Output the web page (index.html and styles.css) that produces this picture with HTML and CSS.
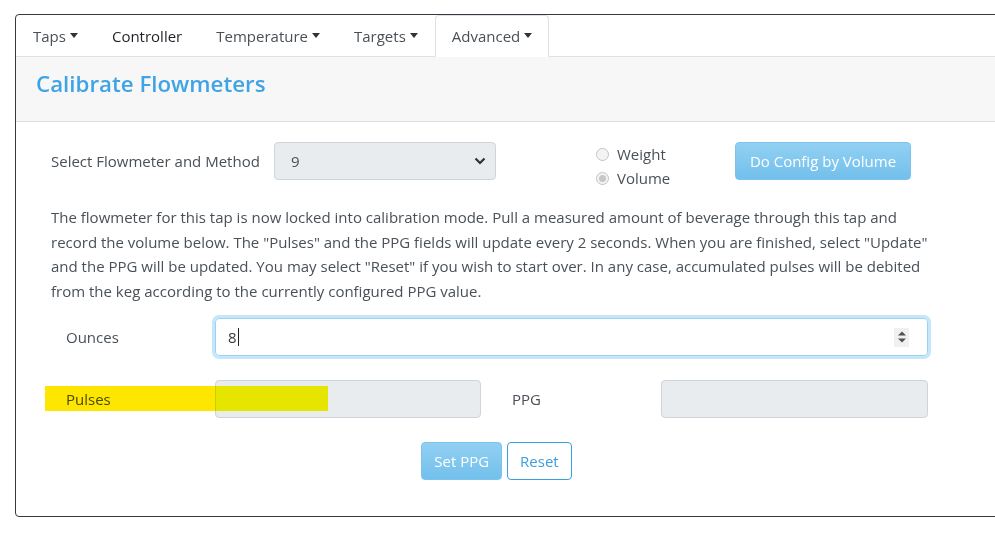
FILE: index.html
```html
<!DOCTYPE html>
<html lang="en">
<head>
    <meta charset="UTF-8">
    <title>Calibrate Flowmeters</title>
    <link rel="stylesheet" href="styles.css">
</head>
<body>
    <div class="card">
        <ul class="nav">
            <li class="nav-link toggle">Taps</li>
            <li class="nav-link dark">Controller</li>
            <li class="nav-link toggle">Temperature</li>
            <li class="nav-link toggle">Targets</li>
            <li class="nav-link toggle active">Advanced</li>
        </ul>

        <div class="card-header">
            <h4>Calibrate Flowmeters</h4>
        </div>

        <div class="card-body">
            <div class="method-row">
                <label class="method-label">Select Flowmeter and Method</label>
                <div class="fake-select">
                    <span>9</span>
                    <svg width="12" height="8" viewBox="0 0 12 8"><path d="M1.5 1.5 L6 6 L10.5 1.5" fill="none" stroke="#333" stroke-width="2.2"/></svg>
                </div>
                <div class="radios">
                    <div class="radio"><span class="dot"></span>Weight</div>
                    <div class="radio"><span class="dot checked"></span>Volume</div>
                </div>
                <button class="btn btn-primary btn-config" disabled>Do Config by Volume</button>
            </div>

            <p class="info">
                The flowmeter for this tap is now locked into calibration mode. Pull a measured amount of beverage through this tap and
                record the volume below. The "Pulses" and the PPG fields will update every 2 seconds. When you are finished, select "Update"
                and the PPG will be updated. You may select "Reset" if you wish to start over. In any case, accumulated pulses will be debited
                from the keg according to the currently configured PPG value.
            </p>

            <div class="form-row">
                <label class="field-label">Ounces</label>
                <div class="input focused">
                    <span class="value">8</span><span class="cursor"></span>
                    <span class="spinner">
                        <svg width="10" height="14" viewBox="0 0 10 14"><path d="M1 5.5 L5 1.5 L9 5.5Z M1 8.5 L5 12.5 L9 8.5Z" fill="#505050"/></svg>
                    </span>
                </div>
            </div>

            <div class="form-row">
                <label class="field-label">Pulses</label>
                <div class="input readonly pulses"></div>
                <label class="field-label ppg-label">PPG</label>
                <div class="input readonly ppg"></div>
                <span class="highlight"></span>
            </div>

            <div class="actions">
                <button class="btn btn-primary" disabled>Set PPG</button>
                <button class="btn btn-outline">Reset</button>
            </div>
        </div>
    </div>
</body>
</html>
```

FILE: styles.css
```css
body {
    margin: 0;
    padding: 14px 0 0 15px;
    font-family: "Open Sans", "Noto Sans", sans-serif;
    font-size: 15px;
    color: #495057;
    background: #fff;
    overflow: hidden;
}
.card {
    width: 1020px;
    height: 503px;
    border: 1px solid #343a40;
    border-radius: 4px;
    box-sizing: border-box;
}

/* tabs */
.nav {
    display: flex;
    list-style: none;
    margin: 0;
    padding: 0;
    border-bottom: 1px solid #dee2e6;
}
.nav-link {
    padding: 8px 16px;
    line-height: 24px;
    border: 1px solid transparent;
    border-radius: 4px 4px 0 0;
    margin-bottom: -1px;
    color: #495057;
}
.nav-link.dark { color: #1e2226; }
.nav-link.active {
    border-color: #dee2e6 #dee2e6 #fff;
    background: #fff;
}
.toggle::after {
    content: "";
    display: inline-block;
    margin-left: 4px;
    vertical-align: 4px;
    border-top: 5px solid #333;
    border-left: 4.5px solid transparent;
    border-right: 4.5px solid transparent;
}

.card-header {
    background: #f7f7f7;
    border-bottom: 1px solid #ddd;
    padding: 13px 20px 23px;
}
.card-header h4 {
    margin: 0;
    font-size: 22.3px;
    line-height: 28px;
    font-weight: 600;
    color: #3fa3e5;
}

.card-body {
    padding: 20px 0 0 35px;
    width: 891px;
}

/* first row */
.method-row {
    display: flex;
    align-items: flex-start;
    height: 63px;
}
.method-label {
    width: 223px;
    line-height: 38px;
}
.fake-select {
    width: 222px;
    height: 38px;
    box-sizing: border-box;
    border: 1px solid #ced4da;
    border-radius: 4px;
    background: #e9ecef;
    display: flex;
    align-items: center;
    justify-content: space-between;
    padding: 0 9px 0 16px;
    color: #495057;
}
.radios {
    margin-left: 100px;
    width: 139px;
}
.radio {
    display: flex;
    align-items: center;
    height: 24px;
    color: #495057;
}
.dot {
    width: 11px;
    height: 11px;
    border: 1px solid #c4c4c4;
    border-radius: 50%;
    background: #f4f4f4;
    margin-right: 8px;
    display: inline-flex;
    align-items: center;
    justify-content: center;
}
.dot.checked::after {
    content: "";
    width: 7px;
    height: 7px;
    border-radius: 50%;
    background: #c6c6c6;
}

.btn {
    font-family: inherit;
    font-size: 15px;
    height: 38px;
    padding: 0 12px;
    border-radius: 4px;
    border: 1px solid transparent;
}
.btn-primary {
    color: #fff;
    background: linear-gradient(#92d0f2, #72c0ec);
    border-color: #7cc4ee;
}
.btn-config { width: 176px; }
.btn-outline {
    background: #fff;
    color: #3a9fe0;
    border-color: #3a9fe0;
}

.info {
    margin: 0 0 15px;
    line-height: 24.5px;
    color: #495057;
}

/* fields */
.form-row {
    position: relative;
    display: flex;
    align-items: center;
    margin-bottom: 24px;
}
.field-label {
    width: 164px;
    padding-left: 15px;
    box-sizing: border-box;
}
.input {
    height: 38px;
    box-sizing: border-box;
    border: 1px solid #ced4da;
    border-radius: 4px;
}
.input.focused {
    width: 713px;
    border-color: #9ad4f4;
    box-shadow: 0 0 0 3px #c6e7f9;
    display: flex;
    align-items: center;
    padding: 0 18px 0 12px;
    color: #3b3b3b;
}
.cursor {
    width: 1px;
    height: 18px;
    background: #222;
    margin-left: 1px;
}
.spinner {
    margin-left: auto;
    width: 15px;
    height: 19px;
    background: #f0f0f0;
    display: flex;
    align-items: center;
    justify-content: center;
}
.input.readonly { background: #e9ecef; }
.pulses { width: 266px; }
.ppg-label {
    width: 180px;
    padding-left: 31px;
}
.ppg { width: 267px; }

/* marker highlight drawn over the Pulses label */
.highlight {
    position: absolute;
    left: -6px;
    top: 6px;
    width: 283px;
    height: 25px;
    mix-blend-mode: multiply;
    background: linear-gradient(to right, #ffe600 0, #ffe600 170px, #fcf800 170px);
}

.actions {
    display: flex;
    justify-content: center;
    gap: 5px;
}
.actions .btn { padding: 0 12px; }
```
